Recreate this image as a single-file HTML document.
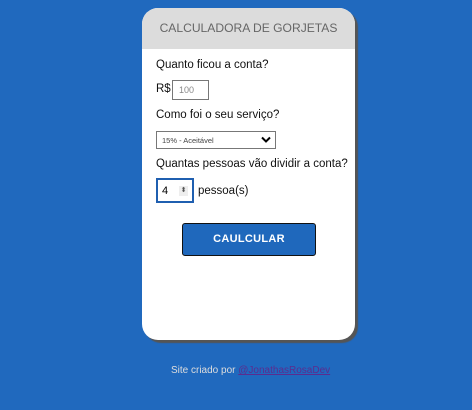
<!DOCTYPE html>
<html><head><style>
body{margin:0;width:472px;height:410px;background:#2069be;font-family:"Liberation Sans",sans-serif;position:relative;overflow:hidden}
.card{position:absolute;left:142px;top:8px;width:213px;height:332px;background:#fff;border-radius:16px;box-shadow:3px 3px 1px #555;overflow:hidden}
.hd{height:41px;background:#dcdcdc;color:#666;font-size:12.1px;text-align:center;line-height:41px}
.t{position:absolute;font-size:11.5px;color:#111;white-space:nowrap}
.in{position:absolute;border:1px solid #777;background:#fff}
</style></head><body>
<div class="card">
<div class="hd">CALCULADORA DE GORJETAS</div>
<div class="t" style="left:14px;top:51px">Quanto ficou a conta?</div>
<div class="t" style="left:14px;top:75px">R$</div>
<div class="in" style="left:30px;top:72px;width:35px;height:18px"><span style="font-size:9px;color:#888;position:absolute;left:6px;top:4px">100</span></div>
<div class="t" style="left:14px;top:101px">Como foi o seu serviço?</div>
<div class="in" style="left:14px;top:123px;width:118px;height:16px"><span style="font-size:7.5px;color:#444;position:absolute;left:5px;top:4px">15% - Aceitável</span>
<svg style="position:absolute;right:4px;top:4px" width="10" height="8"><path d="M1 1.5L5 5.5 9 1.5" stroke="#000" stroke-width="2" fill="none"/></svg></div>
<div class="t" style="left:14px;top:150px">Quantas pessoas vão dividir a conta?</div>
<div style="position:absolute;left:14px;top:170px;width:38px;height:25px;border:2px solid #1f5fb0;box-sizing:border-box"><span style="position:absolute;left:4px;top:5px;font-size:11px">4</span><span style="position:absolute;left:21px;top:6px;width:9px;height:10px;background:#eee;font-size:7px;line-height:10px;text-align:center;color:#555">⬍</span></div>
<div class="t" style="left:56px;top:177px">pessoa(s)</div>
<div style="position:absolute;left:40px;top:215px;width:134px;height:33px;background:#1f68bc;border:1px solid #111;border-radius:3px;box-sizing:border-box;color:#fff;font-weight:bold;font-size:11px;text-align:center;line-height:31px;letter-spacing:.3px">CAULCULAR</div>
</div>
<div style="position:absolute;left:171px;top:365px;font-size:10px;color:#ddd;white-space:nowrap">Site criado por <span style="color:#5b2c8f;text-decoration:underline">@JonathasRosaDev</span></div>
</body></html>
